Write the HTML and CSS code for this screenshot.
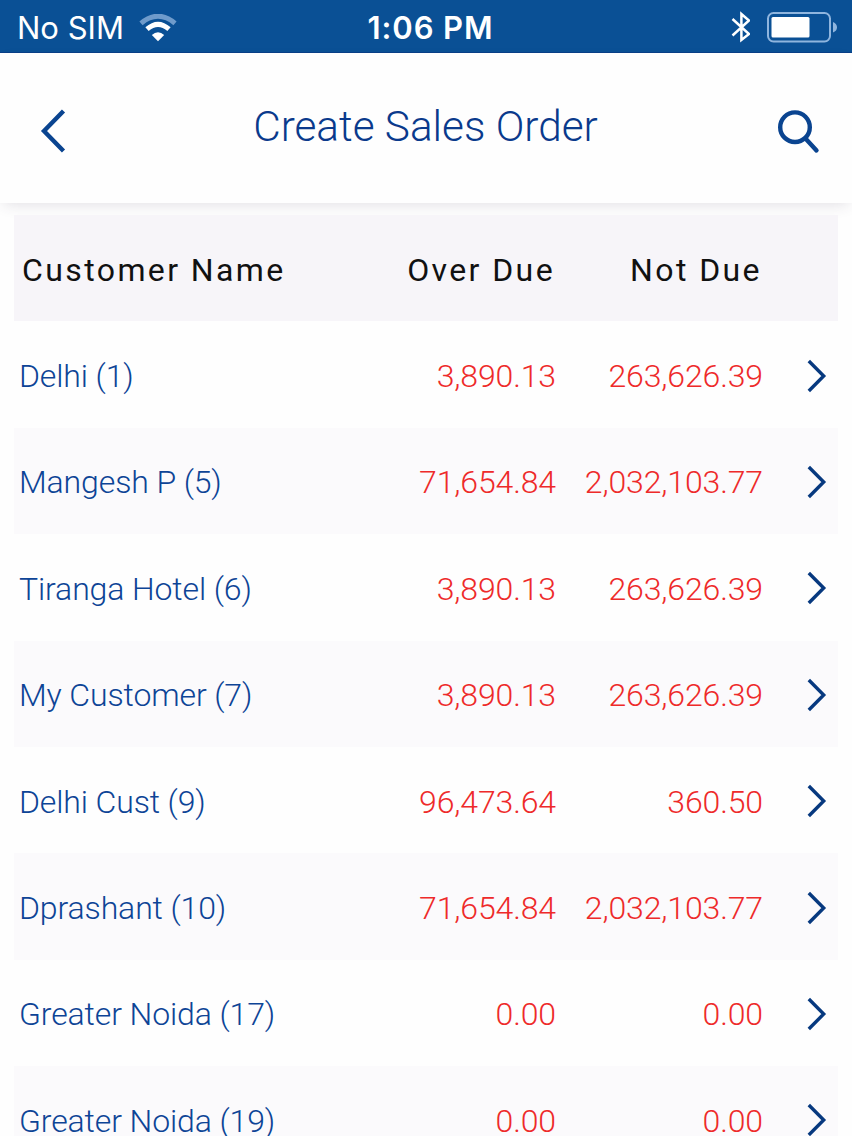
FILE: index.html
```html
<!DOCTYPE html>
<html lang="en">
<head>
  <meta charset="UTF-8">
  <meta name="viewport" content="width=device-width, initial-scale=1.0">
  <title>Create Sales Order</title>
  <link rel="stylesheet" href="styles.css">
</head>
<body>
  <div class="status-bar">
    <div class="status-left">
      <span class="carrier">No SIM</span>
      <svg class="wifi" width="38" height="28" viewBox="0 0 38 28">
        <path d="M2 9.3 Q19 -4.8 36 9.3" fill="none" stroke="#6f9bcb" stroke-width="5"/>
        <path d="M8 15.2 Q19 5.5 30 15.2" fill="none" stroke="#fff" stroke-width="5"/>
        <path d="M12.8 21 Q19 15.6 25.2 21 L19 27.2 Z" fill="#fff"/>
      </svg>
    </div>
    <span class="time">1:06 PM</span>
    <div class="status-right">
      <svg width="20" height="32" viewBox="0 0 20 32">
        <path d="M2.5 8 L19 23 L11.4 29 V3 L19 9.5 L2.5 24.5" fill="none" stroke="#fff" stroke-width="2.5"/>
      </svg>
      <svg width="72" height="32" viewBox="0 0 72 32">
        <rect x="2" y="2" width="62" height="28.5" rx="5.5" fill="none" stroke="#8fb5de" stroke-width="2"/>
        <rect x="5.5" y="6" width="38" height="20.5" rx="1.5" fill="#fff"/>
        <path d="M67 11 Q71 13 71 16.3 Q71 20 67 21.5 Z" fill="#8fb5de"/>
      </svg>
    </div>
  </div>

  <div class="header">
    <svg class="back" width="30" height="46" viewBox="0 0 30 46">
      <path d="M26.5 3 L7 23 L26.5 43" fill="none" stroke="#0a4490" stroke-width="4.4"/>
    </svg>
    <h1>Create Sales Order</h1>
    <svg class="search" width="44" height="46" viewBox="0 0 44 46">
      <circle cx="19" cy="19.2" r="14.8" fill="none" stroke="#0a4490" stroke-width="4.4"/>
      <path d="M29.5 30.5 L40.5 42.5" fill="none" stroke="#0a4490" stroke-width="4.4" stroke-linecap="round"/>
    </svg>
  </div>

  <div class="table">
    <div class="row table-head">
      <span>Customer Name</span>
      <span class="num">Over Due</span>
      <span class="num">Not Due</span>
    </div>
    <div id="customers"></div>
  </div>

  <script>
    const customers = [
      ['Delhi (1)', '3,890.13', '263,626.39'],
      ['Mangesh P (5)', '71,654.84', '2,032,103.77'],
      ['Tiranga Hotel (6)', '3,890.13', '263,626.39'],
      ['My Customer (7)', '3,890.13', '263,626.39'],
      ['Delhi Cust (9)', '96,473.64', '360.50'],
      ['Dprashant (10)', '71,654.84', '2,032,103.77'],
      ['Greater Noida (17)', '0.00', '0.00'],
      ['Greater Noida (19)', '0.00', '0.00'],
    ];

    // Build the customer rows
    document.getElementById('customers').innerHTML = customers.map(([name, overDue, notDue]) => `
      <div class="row customer">
        <span class="name">${name}</span>
        <span class="num">${overDue}</span>
        <span class="num">${notDue}</span>
        <svg class="chevron" width="20" height="34" viewBox="0 0 20 34">
          <path d="M1.8 2 L16.7 17 L1.8 32" fill="none" stroke="#07397f" stroke-width="3.4"/>
        </svg>
      </div>`).join('');
  </script>
</body>
</html>
```

FILE: styles.css
```css
* {
  box-sizing: border-box;
}

body {
  margin: 0;
  height: 1136px;
  overflow: hidden;
  background: #fefefe;
  font-family: Roboto, sans-serif;
}

.status-bar {
  display: grid;
  grid-template-columns: 1fr auto 1fr;
  align-items: center;
  height: 53px;
  padding: 2px 14px 0 17px;
  background: #0a5095;
  border-bottom: 1px solid #093f88;
  color: #fff;
  font-family: Inter, sans-serif;
  font-size: 31px;
}

.status-left,
.status-right {
  display: flex;
  align-items: center;
}

.status-left {
  gap: 15px;
}

.status-right {
  justify-content: flex-end;
  gap: 16px;
}

.wifi {
  margin-top: 1px;
}

.time {
  padding-left: 6px;
  font-weight: 600;
  letter-spacing: 0.9px;
}

.header {
  display: flex;
  align-items: center;
  justify-content: space-between;
  height: 150px;
  padding: 6px 32px 0 37px;
  background: #fefefe;
  box-shadow: 0 5px 14px -4px rgba(60, 50, 80, 0.16);
}

.header h1 {
  margin: 0 0 10px;
  padding-left: 8px;
  color: #0a3a8c;
  font-size: 42.3px;
  font-weight: 300;
}

.table {
  margin: 12px 14px 0;
}

.row {
  display: grid;
  grid-template-columns: 330px 212px 207px 1fr;
  align-items: center;
  height: 106.4px;
  font-size: 32px;
  font-weight: 300;
}

.num {
  text-align: right;
}

.table-head {
  padding: 4px 0 0 8px;
  grid-template-columns: 320px 213px 207px;
  background: #f7f5f9;
  color: #111;
  font-weight: 400;
  letter-spacing: 2.4px;
}

.customer {
  padding-top: 3px;
  letter-spacing: -0.12px;
}

.customer:nth-child(even) {
  background: #fbfafc;
}

.name {
  padding-left: 5px;
  color: #0d4496;
}

.customer .num {
  color: #ee2a2a;
}

.chevron {
  justify-self: end;
  margin: 0 11px 1px 0;
}
```
